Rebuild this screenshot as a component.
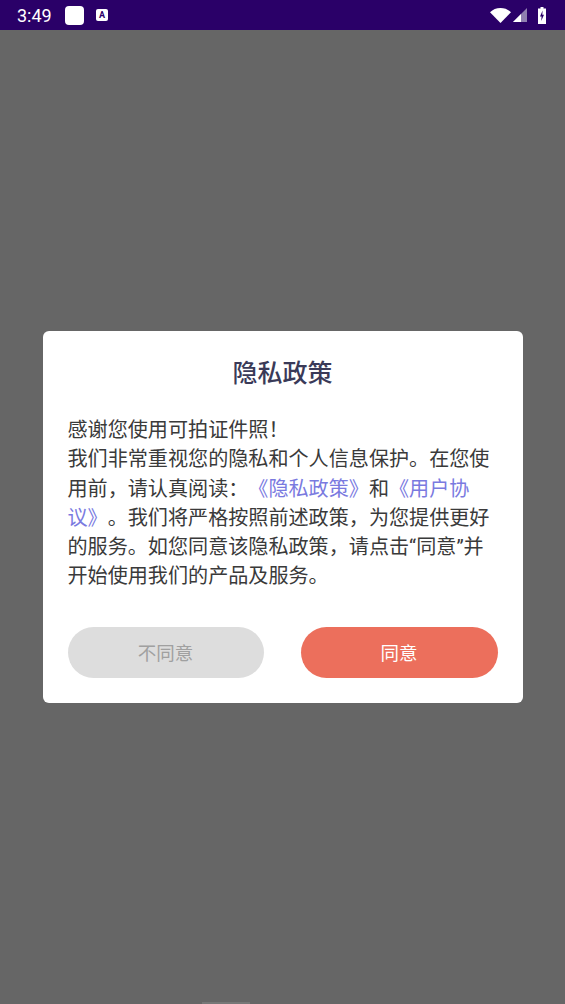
<div class="screen">
  <header class="status">
    <span class="time">3:49</span>
    <span class="appIcon"></span>
    <span class="aIcon">A</span>
    <div class="right">
      <svg class="wifi" width="21" height="15" viewBox="0 0 21 15"><path d="M0 4.200C2.800 1.500 6.400 0 10.500 0s7.700 1.500 10.500 4.200L10.500 15z" fill="#fff"/></svg>
      <svg class="signal" width="14" height="14" viewBox="0 0 14 14"><path d="M14 0V14H0z" fill="#8f7fb0"/><path d="M8 6V14H0z" fill="#fff"/></svg>
      <svg class="battery" width="8" height="17" viewBox="0 0 8 17"><path d="M2.500 0h3v1.500H8V17H0V1.500h2.500z" fill="#fff"/><path d="M4.600 3.500L2 9.500H3.600L3.200 14 6 7.800H4.300z" fill="#2a0068"/></svg>
    </div>
  </header>

  <main class="overlay">
    <div class="dialog">
      <h1>隐私政策</h1>
      <p>感谢您使用可拍证件照！<br />我们非常重视您的隐私和个人信息保护。在您使用前，请认真阅读：<a href="#a">《隐私政策》</a>和<a href="#b">《用户协议》</a>。我们将严格按照前述政策，为您提供更好的服务。如您同意该隐私政策，请点击“同意”并开始使用我们的产品及服务。</p>
      <div class="actions">
        <button class="no">不同意</button>
        <button class="yes">同意</button>
      </div>
    </div>
  </main>
  <div class="navHandle"></div>
</div>

<style>
  :global(body) {
    margin: 0;
  }

  .screen {
    width: 565px;
    height: 1004px;
    display: flex;
    flex-direction: column;
    position: relative;
    overflow: hidden;
    background: #666666;
    font-family: Roboto, "Noto Sans CJK SC", sans-serif;
  }

  .status {
    height: 30px;
    flex: none;
    display: flex;
    align-items: center;
    padding: 0 19px 0 17px;
    box-sizing: border-box;
    background: #2a0068;
    color: #fff;
  }

  .time {
    font-size: 18px;
    width: 48px;
  }

  .appIcon {
    width: 19px;
    height: 19px;
    border-radius: 4px;
    background: #fff;
  }

  .aIcon {
    width: 12px;
    height: 12px;
    margin-left: 12px;
    border-radius: 2px;
    background: #fff;
    color: #2a0068;
    font: bold 9px/12px Roboto, sans-serif;
    text-align: center;
  }

  .right {
    margin-left: auto;
    display: flex;
    align-items: center;
    gap: 2px;
  }

  .battery {
    margin-left: 9px;
  }

  .overlay {
    flex: 1;
    display: flex;
    align-items: flex-start;
    justify-content: center;
    padding-top: 301px;
  }

  .dialog {
    width: 480px;
    box-sizing: border-box;
    padding: 25px 25px 25px;
    background: #fff;
    border-radius: 6px;
  }

  h1 {
    margin: 0;
    text-align: center;
    font-size: 25px;
    line-height: 36px;
    font-weight: 500;
    color: #3a3a58;
  }

  p {
    margin: 24px 0 0;
    font-size: 20.1px;
    line-height: 29.3px;
    color: #3a3a3a;
    text-spacing-trim: space-all;
  }

  a {
    color: #7a7adf;
    text-decoration: none;
  }

  .actions {
    margin-top: 35px;
    display: flex;
    justify-content: space-between;
  }

  button {
    width: 196px;
    height: 51px;
    border: none;
    border-radius: 26px;
    font-family: inherit;
    font-size: 18.5px;
  }

  .no {
    background: #dddddd;
    color: #a0a0a0;
  }

  .yes {
    width: 197px;
    background: #ec6f5c;
    color: #fff;
  }

  .navHandle {
    position: absolute;
    left: 202px;
    bottom: 0;
    width: 48px;
    height: 2px;
    background: #777;
  }
</style>
